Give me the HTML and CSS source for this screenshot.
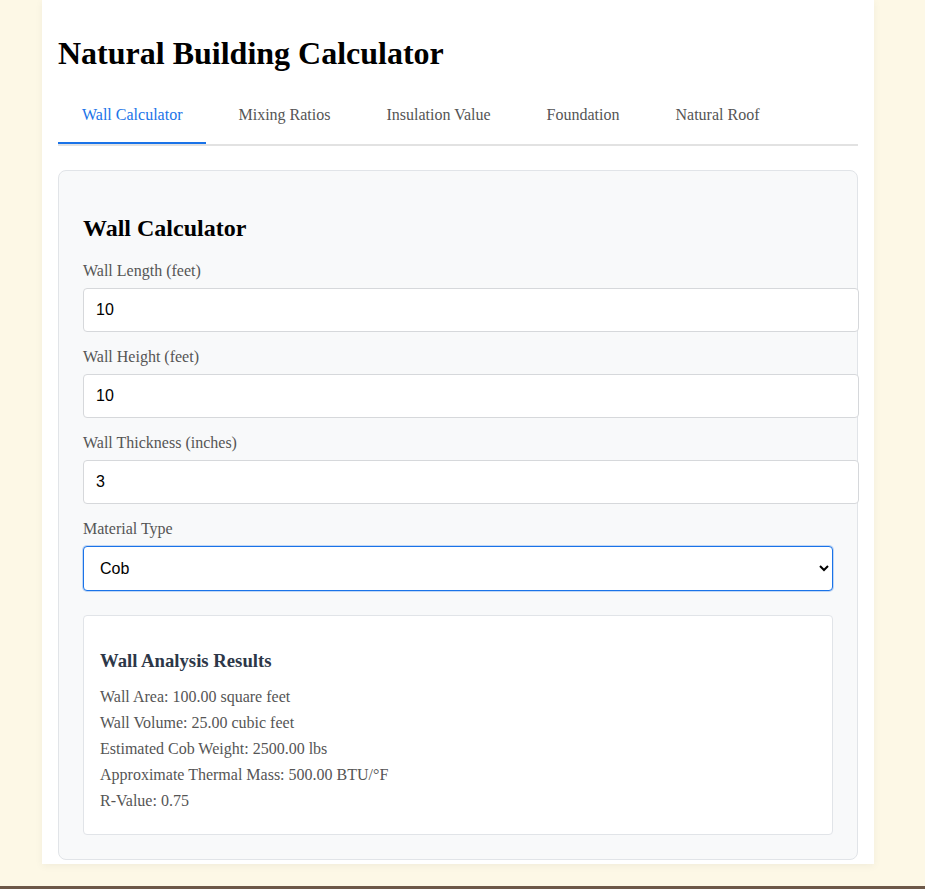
FILE: index.html
```html
<!DOCTYPE html>
<html lang="en">
<head>
<meta charset="utf-8">
<title>Natural Building Calculator</title>
<link rel="stylesheet" href="styles.css">
</head>
<body>
<div class="container">
  <h1 class="title">Natural Building Calculator</h1>
  <div class="tabs">
    <button class="tab active">Wall Calculator</button>
    <button class="tab">Mixing Ratios</button>
    <button class="tab">Insulation Value</button>
    <button class="tab">Foundation</button>
    <button class="tab">Natural Roof</button>
  </div>
  <div class="card">
    <h2 class="card-title">Wall Calculator</h2>
    <div class="form-group">
      <label class="label" for="len">Wall Length (feet)</label>
      <input class="input" id="len" type="number" value="10">
    </div>
    <div class="form-group">
      <label class="label" for="hgt">Wall Height (feet)</label>
      <input class="input" id="hgt" type="number" value="10">
    </div>
    <div class="form-group">
      <label class="label" for="thk">Wall Thickness (inches)</label>
      <input class="input" id="thk" type="number" value="3">
    </div>
    <div class="form-group">
      <label class="label" for="mat">Material Type</label>
      <select class="select" id="mat">
        <option>Cob</option>
        <option>Straw Bale</option>
        <option>Adobe</option>
        <option>Rammed Earth</option>
      </select>
    </div>
    <div class="results">
      <h3 class="results-title">Wall Analysis Results</h3>
      <p class="result-line">Wall Area: 100.00 square feet</p>
      <p class="result-line">Wall Volume: 25.00 cubic feet</p>
      <p class="result-line">Estimated Cob Weight: 2500.00 lbs</p>
      <p class="result-line">Approximate Thermal Mass: 500.00 BTU/°F</p>
      <p class="result-line">R-Value: 0.75</p>
    </div>
  </div>
</div>
<footer class="footer"></footer>
</body>
</html>
```
FILE: styles.css
```css
html, body {
  margin: 0;
  padding: 0;
}
body {
  background: #fdf8e6;
  font-family: "Liberation Serif", "Times New Roman", serif;
  color: #000;
}
.container {
  box-sizing: border-box;
  width: 832px;
  margin-left: 42px;
  background: #fff;
  padding: 14px 16px 4px;
  box-shadow: 0 2px 8px rgba(0, 0, 0, 0.05);
}
.title {
  font-size: 32px;
  font-weight: bold;
  margin: 21px 0 22px;
}
.tabs {
  display: flex;
  gap: 8px;
  border-bottom: 2px solid #e2e2e2;
}
.tab {
  font-family: inherit;
  font-size: 16px;
  color: #555;
  background: none;
  border: none;
  border-bottom: 2px solid transparent;
  padding: 12px 24px 18px;
  margin: 0 0 0 0;
  cursor: pointer;
}
.tab.active {
  color: #1a73e8;
  border-bottom-color: #1a73e8;
}
.card {
  margin-top: 24px;
  background: #f8f9fa;
  border: 1px solid #e1e4e8;
  border-radius: 8px;
  padding: 24px;
}
.card-title {
  font-size: 24px;
  margin: 20px 0;
}
.form-group {
  margin-bottom: 16px;
}
.label {
  display: block;
  color: #555;
  font-size: 16px;
  margin-bottom: 8px;
}
.input {
  display: block;
  width: 100%;
  padding: 12px;
  border: 1px solid #d6d8db;
  border-radius: 4px;
  font-family: "Liberation Sans", Arial, sans-serif;
  font-size: 16px;
  color: #000;
  background: #fff;
  margin: 0;
}
.select {
  display: block;
  box-sizing: border-box;
  width: 100%;
  padding: 12px;
  border: 1px solid #1a73e8;
  border-radius: 4px;
  font-family: "Liberation Sans", Arial, sans-serif;
  font-size: 16px;
  color: #000;
  background: #fff;
  box-shadow: 0 0 0 1px rgba(26, 115, 232, 0.25);
  margin: 0;
}
.results {
  margin-top: 24px;
  background: #fff;
  border: 1px solid #e1e4e8;
  border-radius: 4px;
  padding: 16px;
}
.results-title {
  font-size: 18.72px;
  color: #2d3748;
  margin: 18px 0 16px;
}
.result-line {
  color: #555;
  font-size: 16px;
  margin: 8px 0;
}
.footer {
  margin-top: 22px;
  height: 60px;
  background: #6d5848;
}
```
